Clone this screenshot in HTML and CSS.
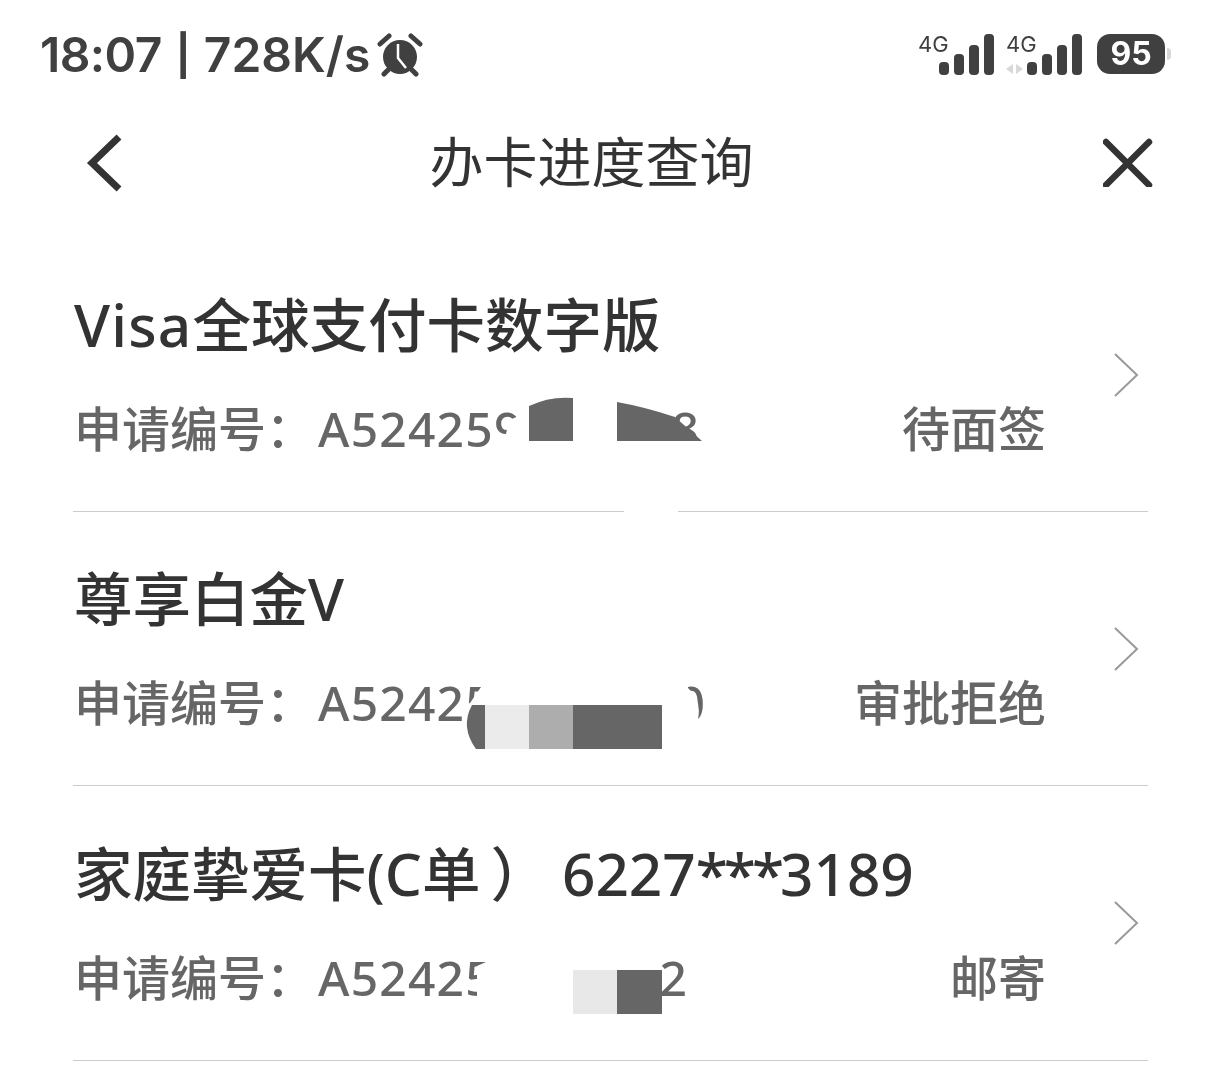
FILE: index.html
```html
<!DOCTYPE html>
<html lang="zh-CN">
<head>
    <meta charset="UTF-8">
    <meta name="viewport" content="width=device-width, initial-scale=1.0">
    <link rel="stylesheet" href="styles.css">
    <title>办卡进度查询</title>
</head>
<body>
  <div class="page">
    <!--status bar-->
    <div class="status">
      <div class="status-left">
        <span><span class="time">18:07</span> <span class="sep">|</span> 728K/s</span>
        <svg class="alarm" viewBox="0 0 46 44" width="46" height="44">
          <circle cx="23" cy="24" r="17" fill="#404040"/>
          <path d="M3 11 L12 3 M34 3 L43 11 M11 37 L7 41 M35 37 L39 41" stroke="#404040" stroke-width="5" stroke-linecap="round" fill="none"/>
          <path d="M21 11 V25 L29 35" stroke="#fff" stroke-width="2.5" fill="none"/>
        </svg>
      </div>
      <div class="status-right">
        <div class="signal">
          <span class="net">4G</span>
          <div class="bars"><i class="b1"></i><i class="b2"></i><i class="b3"></i><i class="b4"></i></div>
        </div>
        <div class="signal">
          <span class="net">4G</span>
          <svg class="arrows" viewBox="0 0 17 10" width="17" height="10"><path d="M7 0 V10 L0 5 Z M10 0 V10 L17 5 Z" fill="#d8d8d8"/></svg>
          <div class="bars"><i class="b1"></i><i class="b2"></i><i class="b3"></i><i class="b4"></i></div>
        </div>
        <div class="battery">95</div>
        <div class="nub"></div>
      </div>
    </div>

    <!--nav-->
    <div class="nav">
      <svg viewBox="0 0 40 60" width="40" height="60"><path d="M35 5 L8 31 L35 57" fill="none" stroke="#333" stroke-width="7"/></svg>
      <h1>办卡进度查询</h1>
      <svg viewBox="0 0 50 50" width="50" height="50"><path d="M3 5 L46 48 M46 5 L3 48" fill="none" stroke="#333" stroke-width="6.5" stroke-linecap="round"/></svg>
    </div>

    <!--list-->
    <ul class="list">
      <li class="row">
        <div class="row-body">
          <div class="name"><span class="latin">Visa</span>全球支付卡数字版</div>
          <div class="meta">
            <span><span class="label">申请编号：</span><span class="num">A524259<span class="gap gap-a"></span>8</span></span>
            <span>待面签</span>
          </div>
        </div>
        <svg class="more" viewBox="0 0 26 46" width="26" height="46"><path d="M2 2 L24 23 L2 44" fill="none" stroke="#999" stroke-width="2"/></svg>
      </li>
      <li class="row">
        <div class="row-body">
          <div class="name">尊享白金<span class="latin">V</span></div>
          <div class="meta">
            <span><span class="label">申请编号：</span><span class="num">A524257<span class="gap gap-b"></span>0</span></span>
            <span>审批拒绝</span>
          </div>
        </div>
        <svg class="more" viewBox="0 0 26 46" width="26" height="46"><path d="M2 2 L24 23 L2 44" fill="none" stroke="#999" stroke-width="2"/></svg>
      </li>
      <li class="row">
        <div class="row-body">
          <div class="name">家庭挚爱卡(C单<span class="paren">）</span><span class="card">6227<span class="stars">***</span>3189</span></div>
          <div class="meta">
            <span><span class="label">申请编号：</span><span class="num">A524255<span class="gap gap-c"></span>2</span></span>
            <span>邮寄</span>
          </div>
        </div>
        <svg class="more" viewBox="0 0 26 46" width="26" height="46"><path d="M2 2 L24 23 L2 44" fill="none" stroke="#999" stroke-width="2"/></svg>
      </li>
    </ul>

    <!--blocks painted over the application numbers-->
    <svg class="mask" viewBox="0 0 1220 1092" width="1220" height="1092">
      <path d="M519 398 V416 L509 420 L506 434 L497 434 V460 H705 V441 H668 V398 Z M624 500 H678 V518 H624 Z" fill="#fff"/>
      <path d="M529 406 Q550 396 573 398 V441 H529 Z" fill="#666"/>
      <path d="M617 402 Q645 407 675 417 L702 441 H617 Z" fill="#666"/>

      <path d="M481 680 V687 L470 703 L466 705 V755 H712 V719 H698 Q702 700 688 688 V680 Z" fill="#fff"/>
      <path d="M485 705 V749 H476 Q460 727 472 705 Z" fill="#666"/>
      <rect x="485" y="705" width="44" height="44" fill="#ebebeb"/>
      <rect x="529" y="705" width="44" height="44" fill="#adadad"/>
      <rect x="573" y="705" width="89" height="44" fill="#666"/>

      <path d="M486 950 V962 L477 966 V1020 H656 V950 Z" fill="#fff"/>
      <rect x="573" y="970" width="44" height="44" fill="#e8e8e8"/>
      <rect x="617" y="970" width="45" height="44" fill="#666"/>
    </svg>
  </div>
</body>
</html>
```

FILE: styles.css
```css
body {
  margin: 0;
  background: #fff;
  font-family: "Noto Sans", "Noto Sans CJK SC", sans-serif;
}

.page {
  position: relative;
  width: 1220px;
  height: 1092px;
  overflow: hidden;
}

.status {
  display: flex;
  justify-content: space-between;
  height: 108px;
  padding: 2px 49px 0 40px;
  box-sizing: border-box;
  color: #404040;
  will-change: transform;
}
.status-left {
  display: flex;
  align-items: center;
  gap: 7px;
  font: 600 48px/1 "Inter", sans-serif;
}
.time {
  letter-spacing: -.6px;
}
.sep {
  margin: 0 1px 0 2px;
  font-size: 40px;
  font-weight: 700;
  vertical-align: 2px;
}
.status-right {
  display: flex;
  align-items: flex-start;
  padding-top: 32px;
}
.signal {
  position: relative;
  width: 75px;
  height: 41px;
  margin-right: 13px;
}
.net {
  position: absolute;
  left: -3px;
  top: 0;
  font: 400 22px/20px "Inter", sans-serif;
}
.arrows {
  position: absolute;
  left: -3px;
  top: 30px;
}
.bars {
  position: absolute;
  left: 18px;
  top: 0;
  display: flex;
  align-items: flex-end;
  gap: 5.5px;
  height: 41px;
}
.bars i {
  display: block;
  width: 9.5px;
  border-radius: 4px;
  background: #404040;
}
.bars .b1 { height: 13px; }
.bars .b2 { height: 21px; }
.bars .b3 { height: 30px; }
.bars .b4 { height: 41px; }

.battery {
  width: 68px;
  height: 40px;
  border-radius: 13px;
  background: #404040;
  color: #fff;
  text-align: center;
  font: 700 32px/40px "Inter", sans-serif;
}
.nub {
  width: 4px;
  height: 12px;
  margin: 14px 0 0 2px;
  border-radius: 0 4px 4px 0;
  background: #d8d8d8;
}

.nav {
  display: flex;
  align-items: center;
  justify-content: space-between;
  height: 108px;
  padding: 0 67px 0 84px;
  will-change: transform;
}
.nav h1 {
  margin: 0 44px 0 0;
  font-size: 54px;
  font-weight: 400;
  line-height: 1;
  color: #333;
}

.list {
  margin: 0 72px 0 73px;
  padding: 22px 0 0;
  list-style: none;
  will-change: transform;
}
.row {
  display: flex;
  align-items: center;
  height: 273px;
  padding-left: 1px;
  border-bottom: 1px solid #ccc;
}
.row:last-child {
  height: 274px;
}
.row-body {
  flex: 1;
  padding: 0 67px 3px 0;
}
.name {
  height: 70px;
  font-size: 58.5px;
  font-weight: 500;
  line-height: 70px;
  color: #333;
  white-space: pre;
}
.latin {
  letter-spacing: 1.2px;
}
.paren {
  margin-left: 10px;
}
.card {
  margin-left: 13px;
}
.stars {
  letter-spacing: -4px;
}
.meta {
  display: flex;
  justify-content: space-between;
  margin-top: 42px;
  font-size: 48px;
  font-weight: 500;
  line-height: 56px;
  color: #666;
}
.label {
  margin-right: 4px;
}
.num {
  letter-spacing: 1.2px;
}
.gap {
  display: inline-block;
}
.gap-a { width: 149px; }
.gap-b { width: 155px; }
.gap-c { width: 137px; }
.more {
  margin-right: 9px;
}

.mask {
  position: absolute;
  left: 0;
  top: 0;
}
```
